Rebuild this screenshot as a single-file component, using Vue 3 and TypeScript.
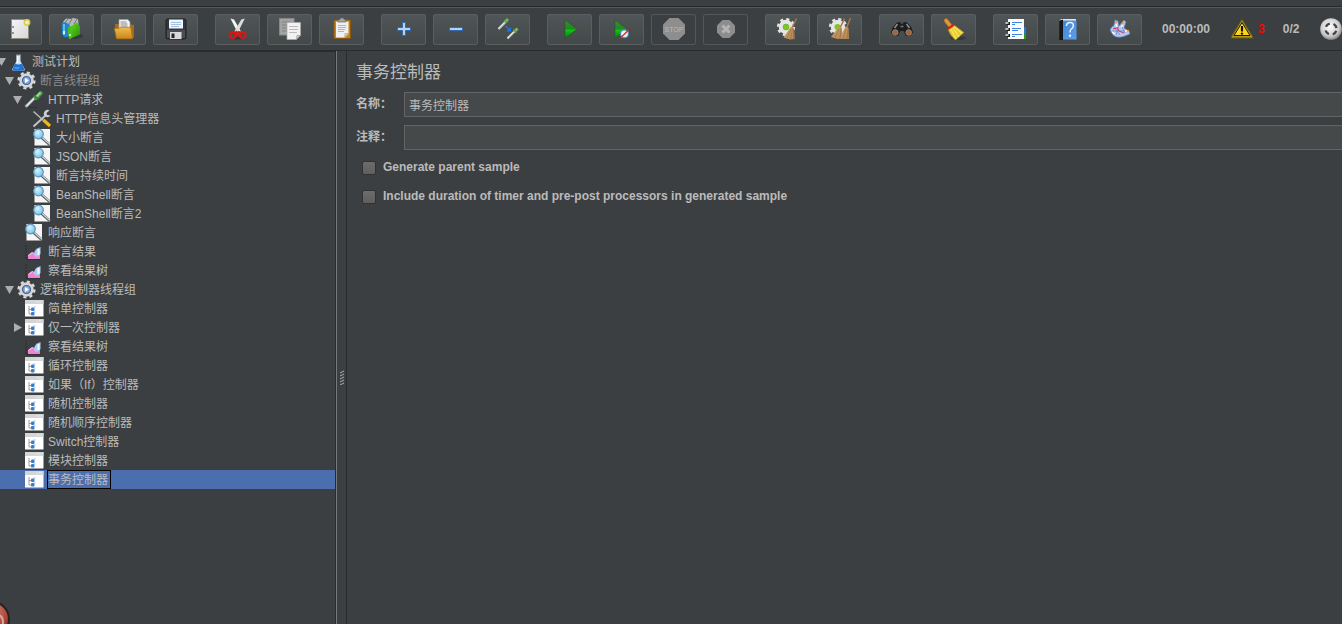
<script setup lang="ts">
import { computed, ref } from 'vue'

interface Tool { id: string; label: string; disabled?: boolean; caption?: string }
interface TreeNode { label: string; level: number; icon: string; open?: boolean; dim?: boolean }

const groups: Tool[][] = [
  [
    { id: 'new', label: '新建' },
    { id: 'templates', label: '模板' },
    { id: 'open', label: '打开' },
    { id: 'save', label: '保存' },
  ],
  [
    { id: 'cut', label: '剪切' },
    { id: 'copy', label: '复制' },
    { id: 'paste', label: '粘贴' },
  ],
  [
    { id: 'plus', label: '展开' },
    { id: 'minus', label: '折叠' },
    { id: 'toggle', label: '切换' },
  ],
  [
    { id: 'start', label: '启动' },
    { id: 'startnp', label: '不停顿开始' },
    { id: 'stop', label: '停止', disabled: true, caption: 'STOP' },
    { id: 'shutdown', label: '关闭', disabled: true },
  ],
  [
    { id: 'clear', label: '清除' },
    { id: 'clearall', label: '清除全部' },
  ],
  [
    { id: 'search', label: '查找' },
    { id: 'reset', label: '重置搜索' },
  ],
  [
    { id: 'functions', label: '函数助手' },
    { id: 'help', label: '帮助' },
    { id: 'plugins', label: '插件' },
  ],
]

const nodes = ref<TreeNode[]>([
  { label: '测试计划', level: 0, icon: 'flask', open: true },
  { label: '断言线程组', level: 1, icon: 'gear', open: true, dim: true },
  { label: 'HTTP请求', level: 2, icon: 'dropper', open: true },
  { label: 'HTTP信息头管理器', level: 3, icon: 'tools' },
  { label: '大小断言', level: 3, icon: 'lens' },
  { label: 'JSON断言', level: 3, icon: 'lens' },
  { label: '断言持续时间', level: 3, icon: 'lens' },
  { label: 'BeanShell断言', level: 3, icon: 'lens' },
  { label: 'BeanShell断言2', level: 3, icon: 'lens' },
  { label: '响应断言', level: 2, icon: 'lens' },
  { label: '断言结果', level: 2, icon: 'result' },
  { label: '察看结果树', level: 2, icon: 'result' },
  { label: '逻辑控制器线程组', level: 1, icon: 'gear', open: true },
  { label: '简单控制器', level: 2, icon: 'ctrl' },
  { label: '仅一次控制器', level: 2, icon: 'ctrl', open: false },
  { label: '察看结果树', level: 2, icon: 'result' },
  { label: '循环控制器', level: 2, icon: 'ctrl' },
  { label: '如果（If）控制器', level: 2, icon: 'ctrl' },
  { label: '随机控制器', level: 2, icon: 'ctrl' },
  { label: '随机顺序控制器', level: 2, icon: 'ctrl' },
  { label: 'Switch控制器', level: 2, icon: 'ctrl' },
  { label: '模块控制器', level: 2, icon: 'ctrl' },
  { label: '事务控制器', level: 2, icon: 'ctrl' },
])

const visible = computed(() => {
  const out: { node: TreeNode; index: number }[] = []
  let hiddenBelow = Infinity
  nodes.value.forEach((node, index) => {
    if (node.level > hiddenBelow) return
    hiddenBelow = node.open === false ? node.level : Infinity
    out.push({ node, index })
  })
  return out
})

const selected = ref(22)
const name = ref('事务控制器')
const comment = ref('')
const parentSample = ref(false)
const includeTimers = ref(false)
</script>

<template>
  <div class="app">
    <svg class="defs" aria-hidden="true">
      <defs>
        <linearGradient id="gPaper" x1="0" y1="0" x2="1" y2="1"><stop offset="0" stop-color="#f4f4f4" /><stop offset="1" stop-color="#d8d8d8" /></linearGradient>
        <linearGradient id="gFolder" x1="0" y1="0" x2="0" y2="1"><stop offset="0" stop-color="#f0bc50" /><stop offset="1" stop-color="#c8861a" /></linearGradient>
        <linearGradient id="gPlay" x1="0" y1="0" x2="0" y2="1"><stop offset="0" stop-color="#3b8a3b" /><stop offset=".5" stop-color="#1f8a1f" /><stop offset=".55" stop-color="#10c810" /><stop offset="1" stop-color="#087808" /></linearGradient>
        <linearGradient id="gBroom" x1="0" y1="0" x2="1" y2="1"><stop offset="0" stop-color="#d0a870" /><stop offset="1" stop-color="#b08250" /></linearGradient>
        <linearGradient id="gGreen" x1="0" y1="0" x2="1" y2="1"><stop offset="0" stop-color="#6fe01f" /><stop offset="1" stop-color="#238c08" /></linearGradient>
        <linearGradient id="gBlue" x1="0" y1="0" x2="1" y2="1"><stop offset="0" stop-color="#3f86d8" /><stop offset="1" stop-color="#5f9fea" /></linearGradient>
        <radialGradient id="gLens" cx=".4" cy=".35" r=".7"><stop offset="0" stop-color="#d5f3ff" /><stop offset="1" stop-color="#72bfe8" /></radialGradient>
        <radialGradient id="gGlobe" cx=".45" cy=".4" r=".6"><stop offset="0" stop-color="#fff" /><stop offset=".7" stop-color="#ccc" /><stop offset="1" stop-color="#8b8b8b" /></radialGradient>
        <radialGradient id="gBall" cx=".45" cy=".25" r=".8"><stop offset="0" stop-color="#d98a7d" /><stop offset=".6" stop-color="#b14a3c" /><stop offset="1" stop-color="#6d2119" /></radialGradient>
      </defs>

      <symbol id="new" viewBox="0 0 45 31">
        <rect x="14.500" y="5.500" width="17" height="19" fill="url(#gPaper)" stroke="#8d8d80" />
        <path d="M16 12v2M16 18v2" stroke="#777" stroke-width="1.500" />
        <circle cx="30" cy="8.500" r="2.700" fill="#f5f0b0" stroke="#d8c94a" stroke-width="1.500" />
      </symbol>
      <symbol id="templates" viewBox="0 0 45 31">
        <ellipse cx="26" cy="22" rx="8" ry="3" fill="#2d3132" opacity=".6" />
        <path d="M14 8l3-3.500 5 .500 2-1 5 1 .700 6-5 3-9 0z" fill="#b4b9ba" />
        <path d="M16 9l3-4M20 10l3-5M25 10l3-5" stroke="#6f7678" />
        <path d="M12.700 9.500l3-1.500 5 2.500v12l-5 1-2.500-3z" fill="#2185c9" />
        <path d="M15 10v11" stroke="#7cc8f2" stroke-width="1.500" />
        <path d="M19 14l9-5.500 3 4v8l-11 4.800z" fill="url(#gGreen)" />
        <path d="M19 14l3-1.800 1 11.500-3 1.300z" fill="#43c414" />
        <path d="M15 17v3M21 20v2" stroke="#fff" stroke-width="1.500" />
      </symbol>
      <symbol id="open" viewBox="0 0 45 31">
        <path d="M14 10h13l6 1v12l-3 2h-15z" fill="#a66d16" />
        <path d="M18 5.500h9l2 2.500v10H18z" fill="#f4f4f4" stroke="#999" stroke-width=".700" />
        <path d="M19.500 8h6M19.500 10h7M19.500 12h7" stroke="#888" />
        <path d="M13.300 14.300q5 .700 7-1h9.400l2 11.500H15.600z" fill="url(#gFolder)" stroke="#a66d16" stroke-width=".700" />
      </symbol>
      <symbol id="save" viewBox="0 0 45 31">
        <path d="M13 6l1-1h18l1 1v18l-1 1H14l-1-1z" fill="#34363d" stroke="#202126" />
        <path d="M14 16h18v8H14z" fill="#4b4d55" />
        <rect x="16" y="5.500" width="14" height="9" fill="#edf4fb" />
        <path d="M18 8.500h10M18 10.500h10M18 12.500h8" stroke="#a4c2dd" />
        <rect x="17" y="18" width="11.500" height="7" fill="#d8d8d8" />
        <rect x="18.500" y="19.500" width="3" height="4.500" fill="#24252b" />
      </symbol>
      <symbol id="cut" viewBox="0 0 45 31">
        <ellipse cx="23" cy="24" rx="7" ry="1.500" fill="#292c2d" opacity=".6" />
        <path d="M15.500 4.500l3.500 1 7 12-3 2z" fill="#f4f4f4" />
        <path d="M29.800 4.500l-3.500 1-7 12 3 2z" fill="#dcdcdc" />
        <path d="M23 17.500l4 3M22.500 17.500l-4 3" stroke="#d01212" stroke-width="2.500" />
        <ellipse cx="18" cy="21" rx="3.200" ry="2.800" fill="none" stroke="#de1515" stroke-width="2" transform="rotate(-25 18 21)" />
        <ellipse cx="27.500" cy="21" rx="3.200" ry="2.800" fill="none" stroke="#de1515" stroke-width="2" transform="rotate(25 27.500 21)" />
      </symbol>
      <symbol id="copy" viewBox="0 0 45 31">
        <rect x="12.500" y="4.500" width="14.500" height="16.500" fill="#a2a4a4" stroke="#868888" />
        <path d="M15 8h9M15 11h9M15 14h5M15 17h5" stroke="#808282" />
        <path d="M20 8.500h13.500v13l-4 4H20z" fill="#f1f1f1" stroke="#aaa" stroke-width=".700" />
        <path d="M22 12.500h9M22 15.500h9M22 18.500h8" stroke="#bbb" />
        <path d="M29.500 25.500l.500-4h3.500z" fill="#c9c9c9" stroke="#888" stroke-width=".600" />
      </symbol>
      <symbol id="paste" viewBox="0 0 45 31">
        <rect x="15" y="6" width="16.500" height="18.500" rx="1" fill="#c58118" stroke="#8a560c" />
        <path d="M17 7.500h12.500V20l-3.500 3.500h-9z" fill="#f0f0f0" />
        <path d="M19 11.500h8M19 13.500h8M19 15.500h7M19 17.500h6" stroke="#b4b4b4" />
        <path d="M25.500 23.500l.500-4h3.500z" fill="#ccc" stroke="#999" stroke-width=".500" />
        <path d="M19 8V6l2-.500.500-1.500h3l.500 1.500 2 .500v2z" fill="#a7a79c" stroke="#666" stroke-width=".700" />
      </symbol>
      <symbol id="plus" viewBox="0 0 45 31">
        <path d="M21.500 8.500h3v5h5v3h-5v5h-3v-5h-5v-3h5z" fill="#b5d3f0" stroke="#2e6cb8" />
      </symbol>
      <symbol id="minus" viewBox="0 0 45 31">
        <rect x="16.500" y="13.500" width="13" height="3" fill="#b5d3f0" stroke="#2e6cb8" />
      </symbol>
      <symbol id="toggle" viewBox="0 0 45 31">
        <path d="M13.500 15l7-7M22.500 24.500l7-7" stroke="#e0e4e0" stroke-width="2.200" />
        <path d="M14.500 15l6-6M23.500 24.500l6-6" stroke="#8f9692" stroke-width=".700" />
        <path d="M19.500 8.500l3.500-3.500M29 18l3.500-3.500" stroke="#77b55a" stroke-width="3" />
        <path d="M19.500 6l3 3M28.500 15.500l3 3" stroke="#5d9450" stroke-width=".800" />
        <path d="M20.500 12l3 3" stroke="#2383ee" stroke-width="1.500" stroke-dasharray="1.500 1" />
        <path d="M21.500 17.500l4.500.200-.200-5z" fill="#1a78f0" />
      </symbol>
      <symbol id="start" viewBox="0 0 45 31">
        <path d="M18 5.700L30 15 18 24.500z" fill="url(#gPlay)" stroke="#1b5a1b" stroke-width=".600" />
      </symbol>
      <symbol id="startnp" viewBox="0 0 45 31">
        <path d="M16 5.700L28 15 16 24.500z" fill="url(#gPlay)" stroke="#1b5a1b" stroke-width=".600" />
        <circle cx="25.500" cy="19.800" r="4" fill="#eef3f8" stroke="#4a88c4" stroke-width="1.200" />
        <path d="M21.500 24l8-8" stroke="#e02c1c" stroke-width="1.400" />
      </symbol>
      <symbol id="stop" viewBox="0 0 45 31">
        <path d="M18.500 4h9l6.500 6.500v9L27.500 26h-9L12 19.500v-9z" fill="#8e8e8e" />
      </symbol>
      <symbol id="shutdown" viewBox="0 0 45 31">
        <path d="M19.500 6h7l5.500 5.500v7L26.500 24h-7L14 18.500v-7z" fill="#8d8d8d" />
        <path d="M19.500 11.500l7 7M26.500 11.500l-7 7" stroke="#b4b4b4" stroke-width="3" />
      </symbol>
      <symbol id="cog" viewBox="0 0 20 20">
        <circle cx="10" cy="10" r="8.300" fill="none" stroke="#e4e4e4" stroke-width="2.600" stroke-dasharray="3.260 3.260" />
        <circle cx="10" cy="10" r="7.600" fill="#e6e6e6" />
      </symbol>
      <symbol id="clear" viewBox="0 0 45 31">
        <use href="#cog" x="11.500" y="3.500" width="19" height="19" />
        <circle cx="21" cy="13" r="3" fill="#7cc820" stroke="#5d9d1b" stroke-width=".500" />
        <path d="M31.500 4.500L27 14" stroke="#a97746" stroke-width="1.500" />
        <path d="M26 12.500l3 1.500.700 11-4.700.500-6.500-2z" fill="url(#gBroom)" />
        <path d="M26 15l-4 9M27.500 15l-2 10M28.500 15v10" stroke="#8d6338" stroke-width=".500" />
      </symbol>
      <symbol id="clearall" viewBox="0 0 45 31">
        <use href="#cog" x="11.500" y="3.500" width="19" height="19" />
        <circle cx="20.500" cy="13" r="3" fill="#7cc820" />
        <path d="M27.500 4.500L23 14M33.500 4L29.500 14" stroke="#a97746" stroke-width="1.500" />
        <path d="M22 12.500l3 1.500.500 11h-5l-6.500-2z" fill="url(#gBroom)" />
        <path d="M28.500 12.500l3 1.500.500 11h-5l-4-1z" fill="url(#gBroom)" />
        <path d="M22 15l-4 8M24 15l-1 10M29 15l-3 9M31 15l-1 10" stroke="#8d6338" stroke-width=".500" />
      </symbol>
      <symbol id="search" viewBox="0 0 45 31">
        <path d="M12 18.500l1.500-5L18 8.500l3-.500 1.500 2h1l1.500-2 3 .500 4.500 5 1.500 5-3 3.500h-4L24.500 17h-3L19 22h-4z" fill="#1d1e1f" />
        <path d="M18.500 10l-3 4M27.500 10l3 4" stroke="#8e9092" stroke-width="1.500" />
        <path d="M21.500 12.500h3" stroke="#777" stroke-width="1.500" />
        <circle cx="16.300" cy="18.500" r="2.800" fill="#b0602a" stroke="#858789" />
        <circle cx="29.700" cy="18.500" r="2.800" fill="#b0602a" stroke="#858789" />
      </symbol>
      <symbol id="reset" viewBox="0 0 45 31">
        <ellipse cx="27" cy="24" rx="8" ry="2" fill="#2b2e2f" opacity=".6" />
        <path d="M15 6.500l4 5" stroke="#a76b20" stroke-width="4.500" stroke-linecap="round" />
        <path d="M15 6.500l4 5" stroke="#d89a44" stroke-width="3" stroke-linecap="round" />
        <path d="M17 15.500l6-4.500 10 7.500-8.500 7.500q-5-4-7.500-10.500z" fill="#e8cc2e" stroke="#a98f10" stroke-width=".600" />
        <path d="M20 15l5 10M22 14l6 9M23 12.500l8 7" stroke="#fff07a" />
        <path d="M16.500 15.200l6.500-4.700" stroke="#d82020" stroke-width="2.200" />
      </symbol>
      <symbol id="functions" viewBox="0 0 45 31">
        <path d="M29 13h4v6h-4z" fill="#2277dc" /><path d="M29 19h4v6h-4z" fill="#249b1f" />
        <rect x="15" y="5" width="16" height="20" fill="#fafafa" />
        <path d="M19 8.500h10M19 10.500h3M19 14.500h9M19 16.500h6M19 20.500h10M19 22.500h3" stroke="#3d84dc" />
        <path d="M13.500 9.500h3.500M13.500 15.500h3.500M13.500 21.500h3.500" stroke="#17191a" stroke-width="3" />
        <path d="M12.500 9h3M12.500 15h3M12.500 21h3" stroke="#eee" stroke-width="1.500" />
      </symbol>
      <symbol id="help" viewBox="0 0 45 31">
        <path d="M14 7l2-2h15v2z" fill="#e4e7ea" /><path d="M14.300 6.500l3.700-1V26h-3.700z" fill="#15171a" />
        <rect x="18" y="6.500" width="13.500" height="19" fill="url(#gBlue)" />
        <path d="M21.500 12q0-3.500 3.500-3.500t3.300 3.200q0 1.800-2 3.300-1.300 1-1.300 3.500" fill="none" stroke="#eaf4ff" stroke-width="1.500" />
        <circle cx="25" cy="21.700" r="1.200" fill="#eaf4ff" />
      </symbol>
      <symbol id="plugins" viewBox="0 0 45 31">
        <path d="M13 16q1-3 4-5l1-5 3 1 1 5 5-6 2 2-2 6 5 3 1 3-5 2q-8 3-12-1z" fill="#b7c8ef" stroke="#6078bd" stroke-width=".700" />
        <path d="M16 12l7 9M22 11l-3 10M24 11l4 8M15 17h14" stroke="#6c88d2" stroke-width=".800" />
        <path d="M20 13l2 4 5 2M16 15l4-1" fill="none" stroke="#d93448" />
        <path d="M18.500 7l1 2M27 8l-2 2M32 17h-3" stroke="#e8a340" stroke-width="1.800" />
        <path d="M19 10l1 3M24 13l2-2M28 17h2M15 18l3 2" stroke="#fff" stroke-width="1.300" />
      </symbol>

      <symbol id="flask" viewBox="0 0 18 19">
        <path d="M7 3h4v6l4.500 8.500-1 1.200h-11l-1-1.200L7 9z" fill="#cfe1ee" />
        <path d="M5.500 11.500q3.500 2 7 0l2.500 6-1 1.200H4l-1-1.200z" fill="#1f72d2" />
        <path d="M8 4v7" stroke="#fff" stroke-width="1.500" /><path d="M6.500 3h5" stroke="#8f9699" /><path d="M5 16h5" stroke="#6fb2f5" />
      </symbol>
      <symbol id="gear" viewBox="0 0 18 19">
        <circle cx="9" cy="9.500" r="7.900" fill="none" stroke="#d9d9d9" stroke-width="2.400" stroke-dasharray="3.100 3.100" />
        <circle cx="9" cy="9.500" r="7.200" fill="#d6d6d6" />
        <circle cx="9" cy="9.500" r="4" fill="#8da9d2" stroke="#3c62a0" stroke-width="1.200" />
        <path d="M7.500 7l4 2.500-4 2.500z" fill="#fff" />
      </symbol>
      <symbol id="dropper" viewBox="0 0 18 19">
        <path d="M0 17.500h12" stroke="#292c2d" opacity=".6" />
        <path d="M0 17l10-10" stroke="#9aa3a1" stroke-width="3" /><path d="M1 16l9-9" stroke="#e2eaea" stroke-width="1.700" />
        <path d="M10.500 8l4.700-4.700" stroke="#4f9549" stroke-width="4.200" stroke-linecap="round" /><path d="M10.500 7l4.500-4.500" stroke="#a0dc98" stroke-width="1.800" />
        <path d="M8.500 5l4.500 4.500" stroke="#3a743a" stroke-width="1.500" />
      </symbol>
      <symbol id="tools" viewBox="0 0 18 19">
        <path d="M0 2.500l10 9" stroke="#bbb" stroke-width="1.500" /><path d="M10 11l6.500 6" stroke="#edb917" stroke-width="3.200" />
        <path d="M0 17.500L12 6.500" stroke="#bfc4c5" stroke-width="2" />
        <path d="M16 1.500a3.600 3.600 0 1 0 1 5l-3.500-.500-.500-2z" fill="#cdd1d2" />
      </symbol>
      <symbol id="lens" viewBox="0 0 18 19">
        <rect x="1" y="1" width="15.500" height="16.500" fill="#f5f5f5" />
        <path d="M8 9.500l8.500 7.500" stroke="#4c555c" stroke-width="2.600" /><path d="M8 9l8.500 7.500" stroke="#cdd6dc" stroke-width="1.200" />
        <circle cx="5" cy="6" r="4.800" fill="url(#gLens)" stroke="#5c93b8" stroke-width="1.200" />
      </symbol>
      <symbol id="result" viewBox="0 0 18 19">
        <path d="M.500 3v14.500H16" fill="none" stroke="#292b2c" stroke-dasharray="2 1" />
        <path d="M2.500 17v-4l4-3 3 2 5 1v4z" fill="#ee83cf" /><path d="M3 13.500l4-3 3 2" fill="none" stroke="#ffc2ee" />
        <path d="M8.500 12q0-5 6.500-7v7l-3 3q-3 0-3.500-3z" fill="#a8ccf5" /><path d="M13 7v6" stroke="#f2f8ff" stroke-width="2" />
      </symbol>
      <symbol id="ctrl" viewBox="0 0 18 19">
        <rect x="-.500" y="1" width="18.500" height="16.500" fill="#fff" /><path d="M-.500 1H18V5H-.500z" fill="#d3d5d6" /><path d="M11 3h5" stroke="#f4f4f4" stroke-dasharray="1 1" />
        <path d="M3.500 7v8h3M3.500 10.500h3" fill="none" stroke="#888" stroke-width=".800" />
        <rect x="5.500" y="8.500" width="3.500" height="3.500" rx="1" fill="#3a7cc8" /><rect x="5.500" y="13" width="3.500" height="3.500" rx="1" fill="#3a7cc8" />
        <path d="M8 8h2M8 13h2" stroke="#93b8e2" />
      </symbol>
    </svg>

    <header class="toolbar" role="toolbar" aria-label="工具栏">
      <div v-for="(group, g) in groups" :key="g" class="group">
        <button v-for="tool in group" :key="tool.id" type="button" class="tool" :disabled="tool.disabled" :aria-label="tool.label">
          <svg class="tool-icon" viewBox="0 0 45 31" aria-hidden="true">
            <use :href="'#' + tool.id" />
            <text v-if="tool.caption" x="23" y="18" text-anchor="middle" class="caption">{{ tool.caption }}</text>
          </svg>
        </button>
      </div>
      <div class="status">
        <span class="time">00:00:00</span>
        <svg class="warn" viewBox="0 0 22 20" aria-hidden="true">
          <path d="M11 .500L21.500 17.500v1.500H.500v-1.500z" fill="#b09a1c" stroke="#6b5d10" />
          <path d="M11 3.500L19 16.500H3z" fill="#ffd51c" stroke="#1e1c10" />
          <path d="M11 7v5.500" stroke="#16140a" stroke-width="2.200" /><circle cx="11" cy="14.600" r="1.200" fill="#16140a" />
        </svg>
        <span class="errors">3</span>
        <span class="threads">0/2</span>
        <svg class="globe" viewBox="0 0 22 22" aria-hidden="true">
          <circle cx="11" cy="11" r="10.800" fill="url(#gGlobe)" />
          <circle cx="11" cy="11" r="5.600" fill="none" stroke="#444" stroke-width="2.400" stroke-dasharray="4.800 3.996" stroke-dashoffset="-2" />
        </svg>
      </div>
    </header>

    <main class="body">
      <nav class="sidebar">
        <ul class="tree" role="tree" aria-label="测试计划">
          <li
            v-for="{ node, index } in visible" :key="index" class="row" :class="{ selected: selected === index, dim: node.dim }"
            role="treeitem" :aria-level="node.level + 1" :aria-selected="selected === index" @click="selected = index"
          >
            <span :style="{ marginLeft: node.level * 8 - 3 + 'px' }" class="twisty-slot">
              <button v-if="node.open !== undefined" type="button" class="twisty" :aria-label="node.open ? '折叠' : '展开'" @click.stop="node.open = !node.open">
                <svg class="arrow" viewBox="0 0 9 9" aria-hidden="true">
                  <path :d="node.open ? 'M0 1h9L4.500 9z' : 'M1 0v9L9 4.500z'" fill="#adadad" />
                </svg>
              </button>
            </span>
            <svg class="node-icon" aria-hidden="true"><use :href="'#' + node.icon" /></svg>
            <span class="label">{{ node.label }}</span>
          </li>
        </ul>
        <svg class="ball" viewBox="0 0 36 36" aria-hidden="true">
          <circle cx="18" cy="18" r="17" fill="url(#gBall)" stroke="#262223" stroke-width="2" />
          <path d="M22 30q7-3 7-9t-5-7" fill="none" stroke="#d5a9a2" stroke-width="2" />
        </svg>
      </nav>
      <div class="splitter" role="separator" aria-orientation="vertical">
        <svg class="grip" viewBox="0 0 5 15" aria-hidden="true">
          <path d="M0 3l4-2M0 6l4-2M0 9l4-2M0 12l4-2M0 15l4-2" stroke="#b0b0b0" />
        </svg>
      </div>
      <section class="panel">
        <h1 class="title">事务控制器</h1>
        <div class="field"><label for="name">名称：</label><input id="name" v-model="name" type="text"></div>
        <div class="field"><label for="comment">注释：</label><input id="comment" v-model="comment" type="text"></div>
        <label class="check"><input v-model="parentSample" type="checkbox">Generate parent sample</label>
        <label class="check"><input v-model="includeTimers" type="checkbox">Include duration of timer and pre-post processors in generated sample</label>
      </section>
    </main>
  </div>
</template>

<style>
html, body { background: #3c3f41; overflow: hidden; }
</style>

<style scoped>
.app {
  display: flex;
  flex-direction: column;
  height: 100vh;
  overflow: hidden;
  background: #3c3f41;
  color: #bbbbbb;
  font: 12px/19px "Liberation Sans", "Noto Sans CJK SC", sans-serif;
}
.defs { position: absolute; width: 0; height: 0; }
symbol { overflow: visible; }
.toolbar {
  display: flex;
  flex: none;
  gap: 17px;
  margin-top: 6px;
  margin-left: -3px;
  padding: 6px 0 5px;
  border-top: 1px solid #272829;
  border-bottom: 1px solid #282a2b;
  box-shadow: inset 0 1px #555759;
}
.group { display: flex; gap: 7px; }
.tool {
  width: 45px;
  height: 31px;
  margin: 1px 0 0;
  padding: 0;
  border: 0;
  border-radius: 3px;
  background: linear-gradient(#505557, #434849);
  box-shadow: inset 0 0 0 1px #5b5e5f;
}
.tool:disabled { background: none; box-shadow: inset 0 0 0 1px #545759; }
.tool-icon { display: block; width: 45px; height: 31px; }
.caption { font: 7px "Liberation Sans", sans-serif; fill: #b8b8b8; }
.status { display: flex; align-items: center; margin-left: 3px; font-weight: bold; white-space: nowrap; }
.warn { width: 22px; height: 20px; margin: 0 5px 0 21px; }
.errors { color: #ff0000; }
.threads { margin: 0 21px 0 18px; }
.globe { flex: none; width: 22px; height: 22px; }
.body { display: flex; flex: 1; min-height: 0; }
.sidebar {
  position: relative;
  flex: none;
  width: 335px;
  border-top: 1px solid #282a2b;
  border-right: 1px solid #2a2c2d;
  overflow: hidden;
}
.tree { margin: 0; padding: 0; list-style: none; }
.row { display: flex; height: 19px; cursor: default; white-space: nowrap; }
.twisty-slot { display: flex; flex: none; align-items: center; width: 9px; margin-right: 3px; }
.twisty { display: block; padding: 0; border: 0; background: none; }
.arrow { display: block; width: 9px; height: 9px; }
.node-icon { flex: none; width: 19px; height: 19px; margin-right: 3px; overflow: visible; }
.label { box-sizing: border-box; height: 19px; padding-right: 2px; border: 1px solid transparent; line-height: 19px; }
.dim { color: #8c8c8c; }
.selected { background: #4b6eaf; }
.selected .label { border-color: #000; }
.ball { position: absolute; left: -26px; bottom: -13px; width: 36px; height: 36px; }
.splitter {
  display: flex;
  flex: none;
  align-items: center;
  justify-content: flex-end;
  width: 8px;
  padding-right: 1px;
  border-left: 1px solid #77797a;
}
.grip { width: 5px; height: 15px; margin-top: 80px; }
.panel {
  flex: 1;
  min-width: 0;
  padding: 10px 0 0 9px;
  border-left: 1px solid #282a2b;
  overflow: hidden;
}
.title { margin: 0 0 8px; font-size: 17px; line-height: 23px; font-weight: normal; }
.field { display: flex; align-items: center; margin-bottom: 8px; }
.field label { flex: none; width: 48px; font-weight: bold; }
.field input {
  flex: 1;
  box-sizing: border-box;
  min-width: 0;
  height: 25px;
  padding: 0 4px;
  border: 1px solid #646464;
  border-right: 0;
  border-radius: 0;
  outline: 0;
  background: #45494a;
  color: inherit;
  font: inherit;
}
.check { display: flex; align-items: center; gap: 7px; width: max-content; margin: 0 0 10px 6px; font-weight: bold; }
.check input {
  appearance: none;
  width: 14px;
  height: 14px;
  margin: 0;
  border: 1px solid #303233;
  border-radius: 2px;
  background: linear-gradient(#6c6c6c, #5f5f5f);
}
.check input:checked { background: #a0a0a0; }
</style>
